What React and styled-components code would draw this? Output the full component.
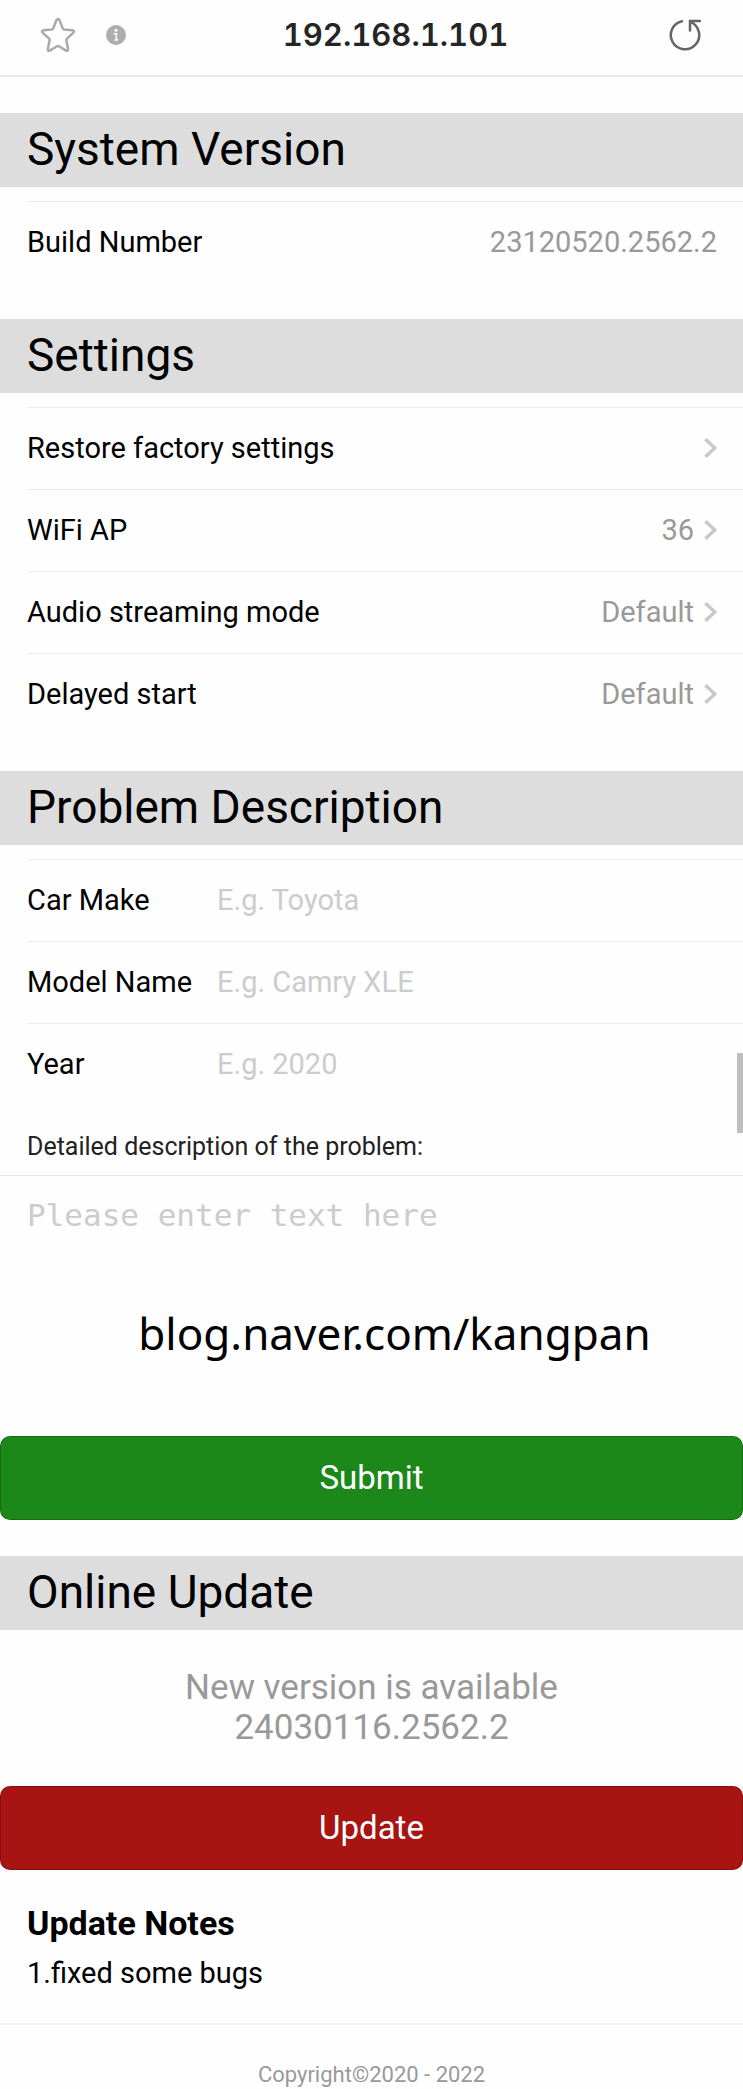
import React, { useState } from "react";
import styled, { createGlobalStyle } from "styled-components";

const GlobalStyle = createGlobalStyle`
  * {
    box-sizing: border-box;
  }
  body {
    margin: 0;
    background-color: #fefefe;
    color: #000;
    font-family: Roboto, "Liberation Sans", sans-serif;
    font-size: 29px;
  }
  h1, h2, h3, p {
    margin: 0;
    font-weight: 400;
  }
`;

const AddressBar = styled.header`
  height: 77px;
  padding: 0 42px 6px 40px;
  border-bottom: 2px solid #e9e9e9;
  display: grid;
  grid-template-columns: 1fr auto 1fr;
  align-items: center;
`;

const AddressTools = styled.div`
  display: flex;
  align-items: center;
  justify-content: ${props => (props.$end ? "flex-end" : "flex-start")};
  gap: 30px;
`;

const IconButton = styled.button`
  padding: 0;
  border: 0;
  background: none;
  display: flex;
  cursor: pointer;
`;

const Address = styled.h1`
  padding-left: 50px;
  color: #252525;
  font-family: Inter, sans-serif;
  font-size: 31px;
  font-weight: 600;
  font-variant-numeric: tabular-nums;
  line-height: 40px;
`;

const Main = styled.main`
  padding-top: 36px;
`;

const SectionTitle = styled.h2`
  padding: 0 27px 2px;
  background-color: #ddd;
  font-size: 46px;
  line-height: 72px;
`;

const Cells = styled.div`
  padding: 14px 0 ${props => (props.$flush ? 0 : 36)}px 27px;
`;

const Cell = styled.div`
  width: 100%;
  height: 82px;
  padding: 0 26px 2px 0;
  border: 0;
  border-top: 1px solid #ececec;
  background: none;
  color: inherit;
  font: inherit;
  text-align: left;
  display: flex;
  align-items: center;
  justify-content: space-between;
`;

const CellValue = styled.span`
  color: #999;
  display: flex;
  align-items: center;
  gap: 10px;
`;

const FieldLabel = styled.label`
  width: 190px;
  flex: none;
`;

const Field = styled.input`
  flex: 1;
  min-width: 0;
  padding: 0;
  border: 0;
  outline: 0;
  background: none;
  font: inherit;
  &::placeholder {
    color: #ccc;
  }
`;

const DetailLabel = styled.label`
  display: block;
  padding: 22px 27px 8px;
  color: #222;
  font-size: 25px;
  line-height: 40px;
`;

const DetailArea = styled.div`
  border-top: 1px solid #e9e9e9;
  padding: 18px 27px 12px;
`;

const Detail = styled.textarea`
  display: block;
  width: 100%;
  height: 84px;
  padding: 0;
  border: 0;
  outline: 0;
  resize: none;
  background: none;
  font-family: "DejaVu Sans Mono", monospace;
  font-size: 31px;
  line-height: 42px;
  &::placeholder {
    color: #ccc;
  }
`;

const BlogName = styled.p`
  padding: 6px 0 66px 46px;
  font-family: "Noto Sans", sans-serif;
  font-size: 44px;
  line-height: 74px;
  text-align: center;
`;

const ActionButton = styled.button`
  display: block;
  width: 100%;
  height: 84px;
  padding: 0 0 2px;
  border: 1px solid rgba(0, 0, 0, 0.2);
  border-radius: 10px;
  background-color: ${props => props.$color};
  color: #fff;
  font-family: inherit;
  font-size: 33px;
  cursor: pointer;
`;

const UpdateSection = styled.section`
  padding-top: 36px;
`;

const VersionMessage = styled.p`
  padding: 38px 27px;
  color: #999;
  font-size: 35px;
  line-height: 40px;
  text-align: center;
`;

const Notes = styled.div`
  padding: 28px 27px 25px;
  border-bottom: 2px solid #f2f2f2;
`;

const NotesTitle = styled.h3`
  font-size: 34px;
  font-weight: 700;
  line-height: 50px;
`;

const NotesText = styled.p`
  line-height: 50px;
`;

const Footer = styled.footer`
  padding-top: 36px;
  color: #999;
  font-size: 22px;
  line-height: 28px;
  text-align: center;
`;

// sits over the right edge of the page
const ScrollThumb = styled.div`
  position: absolute;
  top: 1053px;
  right: 0;
  width: 6px;
  height: 80px;
  background-color: #bfbfbf;
`;

const StarIcon = () => (
  <svg width="36" height="36" viewBox="0 0 36 36" fill="none">
    <path
      d="M16.4 3.2Q18 0.6 19.5 3.2L22.8 11.4Q23.2 12.3 24.2 12.5L32.4 13.3Q35.2 13.8 33.2 15.9L26.9 21.6Q26.2 22.3 26.4 23.3L28 31.8Q28.2 34.8 25.6 33.4L19 29.2Q18 28.6 17 29.2L10.2 33.4Q7.6 34.8 7.9 31.8L9.6 23.3Q9.8 22.3 9.1 21.6L2.8 15.9Q0.8 13.8 3.6 13.3L11.8 12.5Q12.8 12.3 13.2 11.4Z"
      stroke="#aaa"
      strokeWidth="2.5"
      strokeLinejoin="round"
    />
  </svg>
);

const InfoIcon = () => (
  <svg width="20" height="20" viewBox="0 0 20 20">
    <circle cx="10" cy="10" r="10" fill="#aeaeae" />
    <circle cx="10" cy="5.2" r="1.5" fill="#fff" />
    <path d="M7.6 8.8H10.4V15.2M8.6 15H12.2" stroke="#fff" strokeWidth="1.6" fill="none" />
  </svg>
);

const ReloadIcon = () => (
  <svg width="32" height="32" viewBox="0 0 32 32" fill="none">
    <path
      d="M13 2.2A14.2 14.2 0 1 0 22 3.2M31 2H21V11.5"
      stroke="#666"
      strokeWidth="2.5"
      strokeLinecap="round"
    />
  </svg>
);

const Chevron = () => (
  <svg width="13" height="20" viewBox="0 0 13 20" fill="none">
    <path d="M1.4 1.2L10.8 10L1.4 18.8" stroke="#c8c8cc" strokeWidth="3.4" />
  </svg>
);

const settings = [
  { name: "Restore factory settings", value: "" },
  { name: "WiFi AP", value: "36" },
  { name: "Audio streaming mode", value: "Default" },
  { name: "Delayed start", value: "Default" }
];

const fields = [
  { id: "make", name: "Car Make", hint: "E.g. Toyota" },
  { id: "model", name: "Model Name", hint: "E.g. Camry XLE" },
  { id: "year", name: "Year", hint: "E.g. 2020" }
];

const App = () => {
  const [form, setForm] = useState({ make: "", model: "", year: "", detail: "" });
  const onChange = e => setForm({ ...form, [e.target.id]: e.target.value });

  return (
    <>
      <GlobalStyle />
      <AddressBar>
        <AddressTools>
          <IconButton aria-label="Bookmark">
            <StarIcon />
          </IconButton>
          <IconButton aria-label="Site information">
            <InfoIcon />
          </IconButton>
        </AddressTools>
        <Address>192.168.1.101</Address>
        <AddressTools $end>
          <IconButton aria-label="Reload">
            <ReloadIcon />
          </IconButton>
        </AddressTools>
      </AddressBar>
      <Main>
        <section>
          <SectionTitle>System Version</SectionTitle>
          <Cells>
            <Cell>
              <span>Build Number</span>
              <CellValue>23120520.2562.2</CellValue>
            </Cell>
          </Cells>
        </section>
        <section>
          <SectionTitle>Settings</SectionTitle>
          <Cells>
            {settings.map(item => (
              <Cell as="button" key={item.name}>
                <span>{item.name}</span>
                <CellValue>
                  {item.value}
                  <Chevron />
                </CellValue>
              </Cell>
            ))}
          </Cells>
        </section>
        <section>
          <SectionTitle>Problem Description</SectionTitle>
          <Cells $flush>
            {fields.map(field => (
              <Cell key={field.id}>
                <FieldLabel htmlFor={field.id}>{field.name}</FieldLabel>
                <Field
                  id={field.id}
                  type="text"
                  placeholder={field.hint}
                  value={form[field.id]}
                  onChange={onChange}
                />
              </Cell>
            ))}
          </Cells>
          <DetailLabel htmlFor="detail">
            Detailed description of the problem:
          </DetailLabel>
          <DetailArea>
            <Detail
              id="detail"
              placeholder="Please enter text here"
              value={form.detail}
              onChange={onChange}
            />
          </DetailArea>
          <BlogName>blog.naver.com/kangpan</BlogName>
          <ActionButton $color="#1b8819">Submit</ActionButton>
        </section>
        <UpdateSection>
          <SectionTitle>Online Update</SectionTitle>
          <VersionMessage>
            New version is available
            <br />
            24030116.2562.2
          </VersionMessage>
          <ActionButton $color="#a81412">Update</ActionButton>
          <Notes>
            <NotesTitle>Update Notes</NotesTitle>
            <NotesText>1.fixed some bugs</NotesText>
          </Notes>
        </UpdateSection>
      </Main>
      <Footer>Copyright©2020 - 2022</Footer>
      <ScrollThumb />
    </>
  );
};

export default App;
